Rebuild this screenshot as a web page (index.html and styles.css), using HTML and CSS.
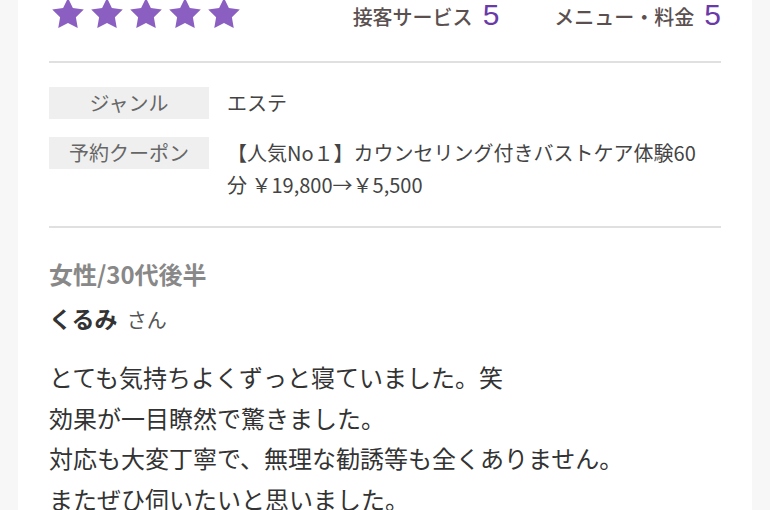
FILE: index.html
```html
<!DOCTYPE html>
<html lang="ja">
<head>
    <meta charset="UTF-8">
    <meta name="viewport" content="width=device-width, initial-scale=1.0">
    <title>口コミ</title>
    <link rel="stylesheet" href="styles.css">
</head>
<body>
    <div class="card">
        <div class="rating-head">
            <div class="stars">
                <svg class="star" viewBox="2 2 20 19"><path d="M12 2l3.09 6.26L22 9.27l-5 4.87 1.18 6.88L12 17.77l-6.18 3.25L7 14.14 2 9.27l6.91-1.01L12 2z"/></svg>
                <svg class="star" viewBox="2 2 20 19"><path d="M12 2l3.09 6.26L22 9.27l-5 4.87 1.18 6.88L12 17.77l-6.18 3.25L7 14.14 2 9.27l6.91-1.01L12 2z"/></svg>
                <svg class="star" viewBox="2 2 20 19"><path d="M12 2l3.09 6.26L22 9.27l-5 4.87 1.18 6.88L12 17.77l-6.18 3.25L7 14.14 2 9.27l6.91-1.01L12 2z"/></svg>
                <svg class="star" viewBox="2 2 20 19"><path d="M12 2l3.09 6.26L22 9.27l-5 4.87 1.18 6.88L12 17.77l-6.18 3.25L7 14.14 2 9.27l6.91-1.01L12 2z"/></svg>
                <svg class="star" viewBox="2 2 20 19"><path d="M12 2l3.09 6.26L22 9.27l-5 4.87 1.18 6.88L12 17.77l-6.18 3.25L7 14.14 2 9.27l6.91-1.01L12 2z"/></svg>
            </div>
            <div class="scores">
                <span class="score"><span class="score-label">接客サービス</span><span class="score-num">5</span></span>
                <span class="score"><span class="score-label">メニュー・料金</span><span class="score-num">5</span></span>
            </div>
        </div>

        <hr class="divider">

        <dl class="info">
            <div class="info-row">
                <dt>ジャンル</dt>
                <dd>エステ</dd>
            </div>
            <div class="info-row">
                <dt>予約クーポン</dt>
                <dd>【人気No１】カウンセリング付きバストケア体験60分 ￥19,800→￥5,500</dd>
            </div>
        </dl>

        <hr class="divider">

        <div class="reviewer">
            <p class="attr">女性/30代後半</p>
            <p class="name">くるみ <span class="honor">さん</span></p>
        </div>

        <p class="comment">
            とても気持ちよくずっと寝ていました。笑<br>
            効果が一目瞭然で驚きました。<br>
            対応も大変丁寧で、無理な勧誘等も全くありません。<br>
            またぜひ伺いたいと思いました。
        </p>
    </div>
</body>
</html>
```

FILE: styles.css
```css
body {
    margin: 0;
    background: #f7f7f7;
    font-family: "Noto Sans CJK JP", "Noto Sans", sans-serif;
    color: #333;
}

.card {
    background: #fff;
    margin: -2px 18px 0;
    padding: 0 31px 40px;
}

.rating-head {
    display: flex;
    justify-content: space-between;
    align-items: flex-start;
    height: 30px;
    margin-bottom: 33px;
}

.stars {
    display: flex;
    gap: 7px;
    padding-left: 3px;
}

.star {
    width: 32px;
    height: 30px;
    fill: #8a5fc1;
}

.scores {
    display: flex;
    gap: 55px;
    padding-top: 2px;
}

.score {
    display: flex;
    align-items: baseline;
    gap: 10px;
}

.score-label {
    font-size: 20px;
    color: #5b5050;
    font-weight: 500;
}

.score-num {
    font-family: "Liberation Sans", sans-serif;
    font-size: 30px;
    line-height: 1;
    color: #6a3aa8;
}

.divider {
    border: none;
    border-top: 2px solid #e0e0e0;
    margin: 0;
}

.info {
    margin: 24px 0 25px;
    display: flex;
    flex-direction: column;
    gap: 18px;
}

.info-row {
    display: flex;
    gap: 18px;
    align-items: flex-start;
}

.info-row dt {
    flex: 0 0 160px;
    height: 32px;
    line-height: 32px;
    background: #efefef;
    text-align: center;
    font-size: 20px;
    color: #666;
}

.info-row dd {
    margin: 0;
    max-width: 476px;
    font-size: 20px;
    line-height: 32px;
    color: #444;
}

.reviewer {
    margin-top: 30px;
}

.attr {
    margin: 0;
    font-size: 24px;
    line-height: 32px;
    font-weight: bold;
    color: #888;
}

.name {
    margin: 12px 0 0;
    font-size: 23px;
    line-height: 32px;
    font-weight: bold;
    color: #333;
}

.honor {
    margin-left: 4px;
    font-size: 20px;
    font-weight: normal;
    color: #555;
}

.comment {
    margin: 21px 0 0;
    font-size: 24px;
    line-height: 40.7px;
    color: #333;
}
```
